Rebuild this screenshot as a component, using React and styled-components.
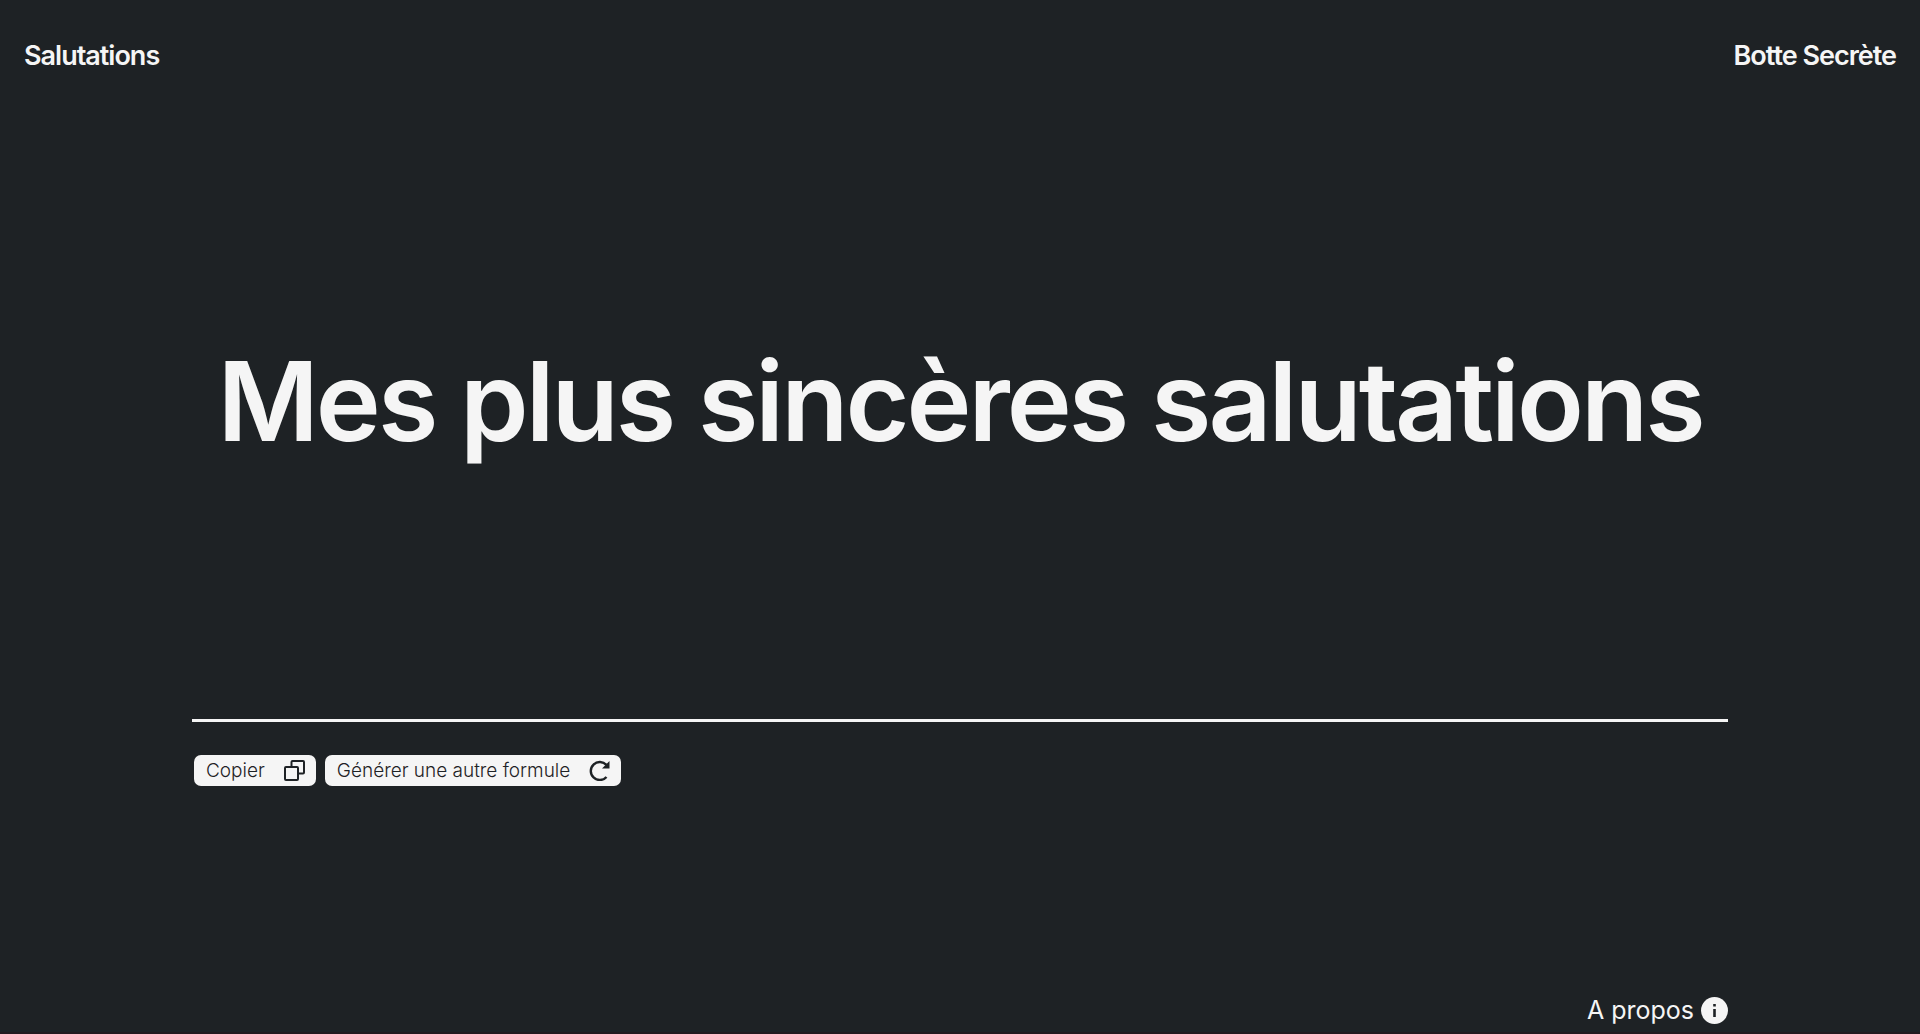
import React, { useState } from 'react';
import styled, { createGlobalStyle } from 'styled-components';

const GlobalStyle = createGlobalStyle`
  * { box-sizing: border-box; }
  body {
    margin: 0;
    background: #1e2225;
    color: #f5f5f5;
    font-family: Inter, "Liberation Sans", sans-serif;
  }
`;

const Page = styled.div`
  min-height: 100vh;
  display: flex;
  flex-direction: column;
  border-bottom: 2px solid #231a1f;
`;

const Header = styled.header`
  display: flex;
  justify-content: space-between;
  align-items: center;
  padding: 40px 24px;
`;

const HeaderLink = styled.a`
  color: inherit;
  text-decoration: none;
  font-size: 27px;
  line-height: 32px;
  font-weight: 600;
  letter-spacing: -1px;
`;

const Main = styled.main`
  flex: 1;
  display: flex;
  flex-direction: column;
  padding: 0 10%;
`;

const Stage = styled.section`
  flex: 1;
  display: flex;
  align-items: center;
  justify-content: center;
  padding-bottom: 30px;
  border-bottom: 3px solid #f5f5f5;
`;

const Formula = styled.h1`
  margin: 0;
  font-size: 110px;
  line-height: 136px;
  font-weight: 600;
  letter-spacing: -3px;
  text-align: center;
`;

const Actions = styled.div`
  display: flex;
  gap: 9px;
  padding: 33px 2px 0;
`;

const ActionButton = styled.button`
  display: flex;
  align-items: center;
  gap: 19px;
  height: 31px;
  padding: 0 11px 0 12px;
  border: 0;
  border-radius: 7px;
  background: #f5f5f5;
  color: #1e2225;
  font-family: inherit;
  font-size: 19px;
  font-weight: 300;
  cursor: pointer;
`;

const Footer = styled.footer`
  display: flex;
  justify-content: flex-end;
  padding: 208px 10% 6px;
`;

const AboutLink = styled.a`
  display: flex;
  align-items: center;
  gap: 7px;
  color: inherit;
  text-decoration: none;
  font-size: 25px;
  line-height: 32px;
`;

const CopyIcon = () => (
  <svg width="21" height="21" viewBox="0 0 21 21" fill="none" stroke="currentColor" strokeWidth="2" strokeLinejoin="round" aria-hidden="true">
    <path d="M7.500 6V2q0-1 1-1H19q1 0 1 1v10.500q0 1-1 1h-4" />
    <rect x="1" y="7" width="13" height="13" rx="1" />
  </svg>
);

const RefreshIcon = () => (
  <svg width="21" height="21" viewBox="0 0 21 21" fill="none" aria-hidden="true">
    <path d="M17.500 5A9 9 0 1 0 17.500 17" stroke="currentColor" strokeWidth="2.400" />
    <path d="M20.500 1v7.500h-7.500z" fill="currentColor" />
  </svg>
);

const InfoIcon = () => (
  <svg width="27" height="27" viewBox="0 0 27 27" aria-hidden="true">
    <circle cx="13.500" cy="13.500" r="13.500" fill="#f5f5f5" />
    <path d="M12.200 7h2.600v2.400h-2.600zM12.200 12h2.600v8h-2.600z" fill="#1e2225" />
  </svg>
);

const formulas = [
  'Mes plus sincères salutations',
  'Bien cordialement',
  'Avec toute ma considération',
];

export default function App() {
  const [index, setIndex] = useState(0);
  const formula = formulas[index];
  return (
    <Page>
      <GlobalStyle />
      <Header>
        <HeaderLink href="#accueil">Salutations</HeaderLink>
        <HeaderLink href="#botte-secrete">Botte Secrète</HeaderLink>
      </Header>
      <Main>
        <Stage>
          <Formula>{formula}</Formula>
        </Stage>
        <Actions>
          <ActionButton type="button" onClick={() => navigator.clipboard?.writeText(formula)}>
            Copier
            <CopyIcon />
          </ActionButton>
          <ActionButton type="button" onClick={() => setIndex((index + 1) % formulas.length)}>
            Générer une autre formule
            <RefreshIcon />
          </ActionButton>
        </Actions>
      </Main>
      <Footer>
        <AboutLink href="#a-propos">
          A propos
          <InfoIcon />
        </AboutLink>
      </Footer>
    </Page>
  );
}
